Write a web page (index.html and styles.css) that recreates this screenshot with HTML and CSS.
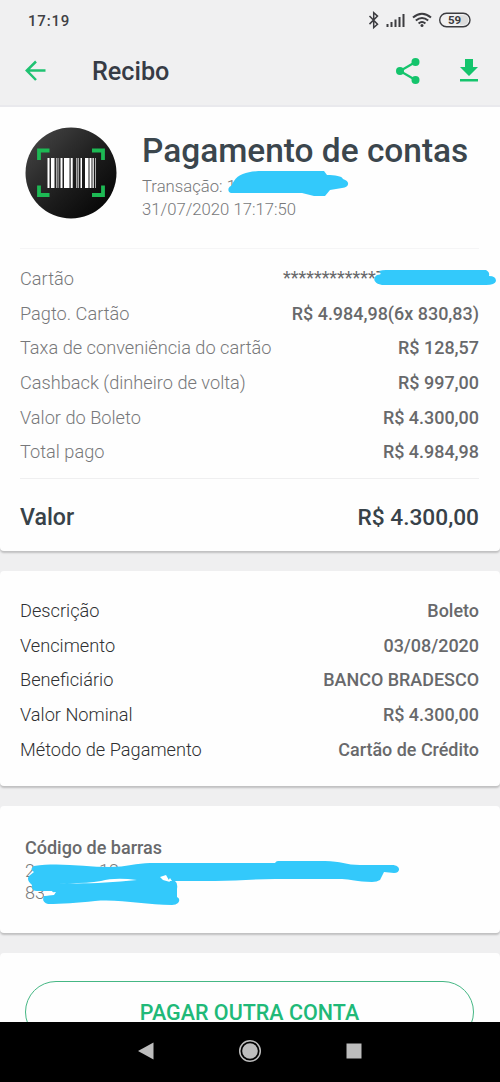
FILE: index.html
```html
<!DOCTYPE html>
<html lang="pt-BR">
<head>
<meta charset="utf-8">
<title>Recibo</title>
<link rel="stylesheet" href="styles.css">
</head>
<body>
<div class="screen">
  <header class="top">
    <div class="status">
      <span class="clock">17:19</span>
      <svg class="status-icons" width="104" height="20" viewBox="368 10 104 20" fill="none" stroke="#3c3c40">
        <path d="M369.5 16l8 8.2-3.8 3.4V12.6l3.8 3.5-8 8" stroke-width="1.5"/>
        <path d="M387.500 24v3M391.500 22v5M395.500 19.500v7.500M399.500 17v10M403.500 14v13" stroke-width="2"/>
        <path d="M413 17.600q9-7.600 18 0M415.800 20.600q6.200-5.200 12.400 0M418.600 23.400q3.400-2.800 6.800 0" stroke-width="2"/>
        <circle cx="422" cy="25.600" r="1.500" fill="#3c3c40" stroke="none"/>
        <rect x="439.700" y="13.200" width="30.300" height="13.600" rx="6.800" stroke-width="1.400"/>
        <path d="M460 15.200h3.500a4.800 4.800 0 0 1 0 9.600H460z" fill="#dcdcdc" stroke="none"/>
        <text class="battery" x="454.500" y="24.200" text-anchor="middle">59</text>
      </svg>
    </div>
    <div class="appbar">
      <svg class="back" width="22" height="22" viewBox="0 0 22 22" fill="none" stroke="#1fc272" stroke-width="2.500"><path d="M11 1.500L1.800 10.500l9.200 9.500M1.800 10.500h18.700"/></svg>
      <h1 class="screen-title">Recibo</h1>
      <svg class="share" width="26" height="28" viewBox="0 0 26 28" fill="#14c46c"><path d="M20.500 5L5 14l15.500 9" fill="none" stroke="#14c46c" stroke-width="2.200"/><circle cx="20.500" cy="5" r="4"/><circle cx="5" cy="14" r="4"/><circle cx="20.500" cy="23" r="4"/></svg>
      <svg class="download" width="20" height="24" viewBox="0 0 20 24" fill="#14c46c"><path d="M6 0h8v8h5l-9 9-9-9h5zM1 20h18v2.600H1z"/></svg>
    </div>
  </header>

  <main class="cards">
    <section class="card card-receipt">
      <div class="summary">
        <svg class="badge" width="92" height="92" viewBox="0 0 92 92">
          <defs><linearGradient id="disc" x1="0" y1="0" x2="1" y2="1"><stop offset="0" stop-color="#4a4a4a"/><stop offset=".55" stop-color="#1c1c1c"/><stop offset="1" stop-color="#000"/></linearGradient></defs>
          <circle cx="46" cy="46" r="45.500" fill="url(#disc)"/>
          <path d="M14 33V23.500h10.500M67 23.500h11V33M14 58.500V68h10.500M67 68h11v-9.500" fill="none" stroke="#1db954" stroke-width="3.800"/>
          <path d="M22.500 31h2v30h-2zM26 31h3.500v30H26zM35.500 31h2v30h-2zM39 31h5.500v30H39zM45.700 31h2v30h-2zM55.500 31h1.500v30h-1.500zM60 31h3.500v30H60zM64.500 31h2v30h-2zM67.500 31h1.300v30h-1.300z" fill="#fff"/>
          <path d="M31 31h1.500v30H31zM33.300 31h.8v30h-.8zM51 31h1.500v30H51zM53 31h1v30h-1zM70 31h1v30h-1z" fill="#aaa"/>
        </svg>
        <div class="summary-text">
          <h2 class="title">Pagamento de contas</h2>
          <p class="meta">Transação: 1</p>
          <p class="meta">31/07/2020 17:17:50</p>
          <svg class="mark mark-id" width="124" height="30" viewBox="226 168 124 30" fill="#33c9fb"><path d="M234 181C239 173 250 171 263 171H324L327 175C335 175 342 176 343 179C350 181 350 187 342 188L330 190L325 196H314L302 193H231C227 192 228 187 231 186Z"/></svg>
        </div>
      </div>
      <dl class="rows rows-soft">
        <div class="row"><dt>Cartão</dt><dd class="masked"><span class="mask-text">************7</span>
          <svg class="mark mark-card" width="124" height="18" viewBox="373 270 124 18" fill="#33c9fb"><path d="M379 272Q382 271 386 271H486Q490 273 489 277Q496 277 496 282Q495 286 486 286H382C374 285 372 279 377 276Q383 276 379 272Z"/></svg></dd></div>
        <div class="row"><dt>Pagto. Cartão</dt><dd>R$ 4.984,98(6x 830,83)</dd></div>
        <div class="row"><dt>Taxa de conveniência do cartão</dt><dd>R$ 128,57</dd></div>
        <div class="row"><dt>Cashback (dinheiro de volta)</dt><dd>R$ 997,00</dd></div>
        <div class="row"><dt>Valor do Boleto</dt><dd>R$ 4.300,00</dd></div>
        <div class="row"><dt>Total pago</dt><dd>R$ 4.984,98</dd></div>
      </dl>
      <div class="total"><span class="total-label">Valor</span><span class="total-value">R$ 4.300,00</span></div>
    </section>

    <section class="card card-details">
      <dl class="rows">
        <div class="row"><dt>Descrição</dt><dd>Boleto</dd></div>
        <div class="row"><dt>Vencimento</dt><dd>03/08/2020</dd></div>
        <div class="row"><dt>Beneficiário</dt><dd>BANCO BRADESCO</dd></div>
        <div class="row"><dt>Valor Nominal</dt><dd>R$ 4.300,00</dd></div>
        <div class="row"><dt>Método de Pagamento</dt><dd>Cartão de Crédito</dd></div>
      </dl>
    </section>

    <section class="card card-barcode">
      <h3 class="barcode-title">Código de barras</h3>
      <p class="digits">2<span class="digits-rest">12</span></p>
      <p class="digits">83</p>
      <svg class="mark mark-barcode" width="380" height="48" viewBox="22 858 380 48"><path fill="#33c9fb" d="M34 866C60 862 85 867 110 867C126 867 137 863 150 863H275Q276 861 278 861H325C341 861 346 865 360 865H392C401 865 401 873 394 873L384 872L380 880Q377 882 372 882C357 882 350 879 342 879H275C255 879 235 881 215 881H172L170 878L168 881H175Q178 883 177 889V897Q181 899 178 903Q176 905 172 905C145 905 121 899 95 901C77 903 62 904 48 904Q41 902 44 896L54 894L52 891H37Q31 891 32 885Q26 880 29 876L34 872Q29 869 34 866Z"/><path d="M58 883C82 884 107 883 137 880Q115 877 101 881Q83 884 58 883ZM160 877L166 875L170 882L163 880ZM44 893l12-1-2 3-10 1z" fill="#fff"/></svg>
    </section>

    <section class="card card-action">
      <button class="pay-button">PAGAR OUTRA CONTA</button>
    </section>
  </main>

  <nav class="navbar">
    <svg width="16" height="18" viewBox="0 0 16 18" fill="#bdbdbd"><path d="M0 9L15.500 .5v17z"/></svg>
    <svg width="24" height="24" viewBox="0 0 24 24"><circle cx="12" cy="12" r="10.300" fill="none" stroke="#bdbdbd" stroke-width="1.500"/><circle cx="12" cy="12" r="7.800" fill="#bdbdbd"/></svg>
    <svg width="16" height="16" viewBox="0 0 16 16" fill="#bdbdbd"><path d="M.5 .5h15v15H.5z"/></svg>
  </nav>
</div>
</body>
</html>
```
FILE: styles.css
```css
* { box-sizing: border-box; margin: 0; padding: 0; }
body { background: #efeff0; font-family: Roboto, "Liberation Sans", sans-serif; color: #5f6062; }
svg { display: block; flex: none; }
.screen { width: 500px; height: 1082px; display: flex; flex-direction: column; overflow: hidden; }

.top { flex: none; height: 107px; background: #f0f0f1; border-bottom: 2px solid #e9e9ed; }
.status { height: 40px; padding: 0 28px; display: flex; align-items: center; justify-content: space-between; }
.clock { font-size: 15px; font-weight: 500; letter-spacing: .8px; color: #404144; padding-top: 1px; }
.battery { font: 700 11.500px Roboto, sans-serif; fill: #3c3c40; stroke: none; }
.appbar { height: 61px; padding: 0 21px 0 25px; display: flex; align-items: center; }
.screen-title { margin-left: 45px; font-size: 25.200px; line-height: 32px; font-weight: 500; color: #363b45; padding-top: 2px; }
.share { margin-left: auto; margin-right: 38px; }

.cards { flex: 1; min-height: 0; display: flex; flex-direction: column; gap: 20px; overflow: hidden; }
.card { flex: none; background: #fefefe; border-radius: 4px; box-shadow: 0 2px 2px rgba(0,0,0,.2); }
.card-receipt { height: 444px; padding: 0 21px 0 20px; border-radius: 0 0 4px 4px; }
.summary { height: 142px; padding: 20px 0 0 5px; display: flex; gap: 25px; border-bottom: 1px solid #f5f5f6; }
.summary-text { position: relative; padding-top: 4px; }
.title { font-size: 33.450px; line-height: 40px; font-weight: 500; color: #3b464d; white-space: nowrap; margin-bottom: 4px; }
.meta { font-size: 16.700px; line-height: 23px; font-weight: 300; color: #77787a; }
.mark { position: absolute; }
.mark-id { left: 84px; top: 41px; }

.rows { padding-top: 12px; color: #2f3032; }
.row { height: 34.700px; display: flex; align-items: center; justify-content: space-between; font-size: 17.950px; }
.row dt { font-weight: 300; font-size: 18.200px; }
.row dd { font-weight: 500; color: #68696b; }
.rows-soft { color: #77787a; height: 230px; border-bottom: 1px solid #efeff0; }
.masked { position: relative; width: 196px; white-space: nowrap; }
.mask-text { display: block; font-weight: 400; padding-bottom: 1px; }
.mark-card { left: 90px; top: 2px; }
.total { height: 72px; padding-top: 4px; display: flex; align-items: center; justify-content: space-between; font-size: 23px; color: #384249; }
.total-label { font-weight: 500; font-size: 23.200px; }
.total-value { font-weight: 500; font-size: 22.700px; }

.card-details { height: 215px; padding: 10px 21px 0 20px; }
.card-barcode { position: relative; height: 127px; padding: 30px 25px 0; }
.barcode-title { font-size: 18px; line-height: 24px; font-weight: 500; color: #68696b; }
.digits { font-size: 18px; line-height: 22px; font-weight: 300; color: #77787a; }
.digits-rest { margin-left: 64px; }
.mark-barcode { left: 22px; top: 52px; }
.card-action { height: 160px; padding: 28px 25px 0; }
.pay-button { display: block; width: 449px; height: 62px; padding-top: 1px; border: 1.500px solid #45b784; border-radius: 31px; background: transparent; color: #20b978; font: 500 21.500px/28px Roboto, sans-serif; }

.navbar { flex: none; height: 60px; background: #000; display: flex; align-items: center; justify-content: center; gap: 84px; padding: 0 1px 3px 0; }
```
